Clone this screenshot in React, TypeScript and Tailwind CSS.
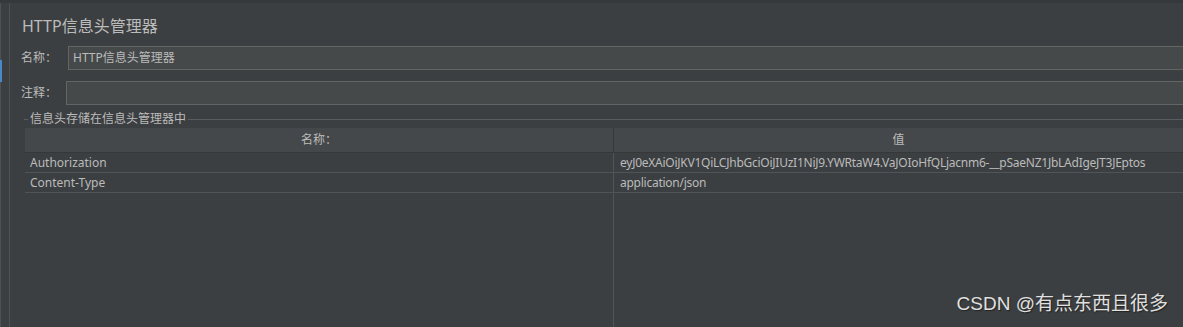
import React from "react";

const rows = [
  { name: "Authorization", value: "eyJ0eXAiOiJKV1QiLCJhbGciOiJIUzI1NiJ9.YWRtaW4.VaJOIoHfQLjacnm6-__pSaeNZ1JbLAdIgeJT3JEptos" },
  { name: "Content-Type", value: "application/json" },
];

const font = { fontFamily: '"Noto Sans", "Noto Sans CJK SC", sans-serif' };

export default function App() {
  return (
    <div
      className="relative flex w-[1183px] h-[327px] overflow-hidden bg-[#3c3f41] text-[#bbbbbb] border-t-[3px] border-[#36393b]"
      style={font}
    >
      {/* left gutter */}
      <div className="relative w-[10px] shrink-0 border-l border-r border-[#4e5254]">
        <div className="absolute left-[-1px] top-[57px] w-[2px] h-[22px] bg-[#4a88c7]" />
      </div>

      <div className="flex-1 flex flex-col pl-[11px] pt-[12px] min-w-0">
        <div className="h-[22px] leading-[22px] text-[16px] ml-px">HTTP信息头管理器</div>

        {/* name */}
        <div className="flex items-center h-[24px] mt-[9px]">
          <span className="w-[47px] text-[12px]">名称：</span>
          <div className="flex-1 h-full bg-[#45494a] border border-r-0 border-[#646464] flex items-center pl-[4px] text-[12px]">
            HTTP信息头管理器
          </div>
        </div>

        {/* comment */}
        <div className="flex items-center h-[24px] mt-[11px]">
          <span className="w-[45px] text-[12px]">注释：</span>
          <div className="flex-1 h-full bg-[#45494a] border border-r-0 border-[#646464]" />
        </div>

        {/* fieldset legend */}
        <div className="flex items-center h-[14px] mt-[7px] ml-[3px]">
          <div className="w-[4px] h-px bg-[#5a5d5f]" />
          <span className="px-[2px] text-[12px] leading-[14px]">信息头存储在信息头管理器中</span>
          <div className="flex-1 h-px bg-[#5a5d5f]" />
        </div>

        {/* table */}
        <div className="flex-1 flex flex-col ml-[4px] mt-[2px] text-[12px]">
          <div className="flex h-[25px] bg-[#45484a] border-b border-[#353739]">
            <div className="w-[589px] flex items-center justify-center border-r border-[#353739]">名称：</div>
            <div className="flex-1 flex items-center justify-center">值</div>
          </div>
          {rows.map((r) => (
            <div key={r.name} className="flex h-[20px] border-b border-[#515456]">
              <div className="w-[589px] flex items-center pl-[5px] pt-px border-r border-[#515456]">{r.name}</div>
              <div className="flex-1 flex items-center pl-[6px] pt-px whitespace-nowrap overflow-hidden tracking-[-0.25px]">{r.value}</div>
            </div>
          ))}
          <div className="flex-1 flex">
            <div className="w-[589px] border-r border-[#515456]" />
            <div className="flex-1" />
          </div>
        </div>
      </div>

      {/* watermark */}
      <div
        className="absolute right-[15px] bottom-[9px] text-[19px] text-[#e0e0e0] [text-shadow:1px_1px_1px_#222]"
        style={{ fontFamily: '"Liberation Sans", "Noto Sans CJK SC", sans-serif' }}
      >
        CSDN @有点东西且很多
      </div>
    </div>
  );
}
